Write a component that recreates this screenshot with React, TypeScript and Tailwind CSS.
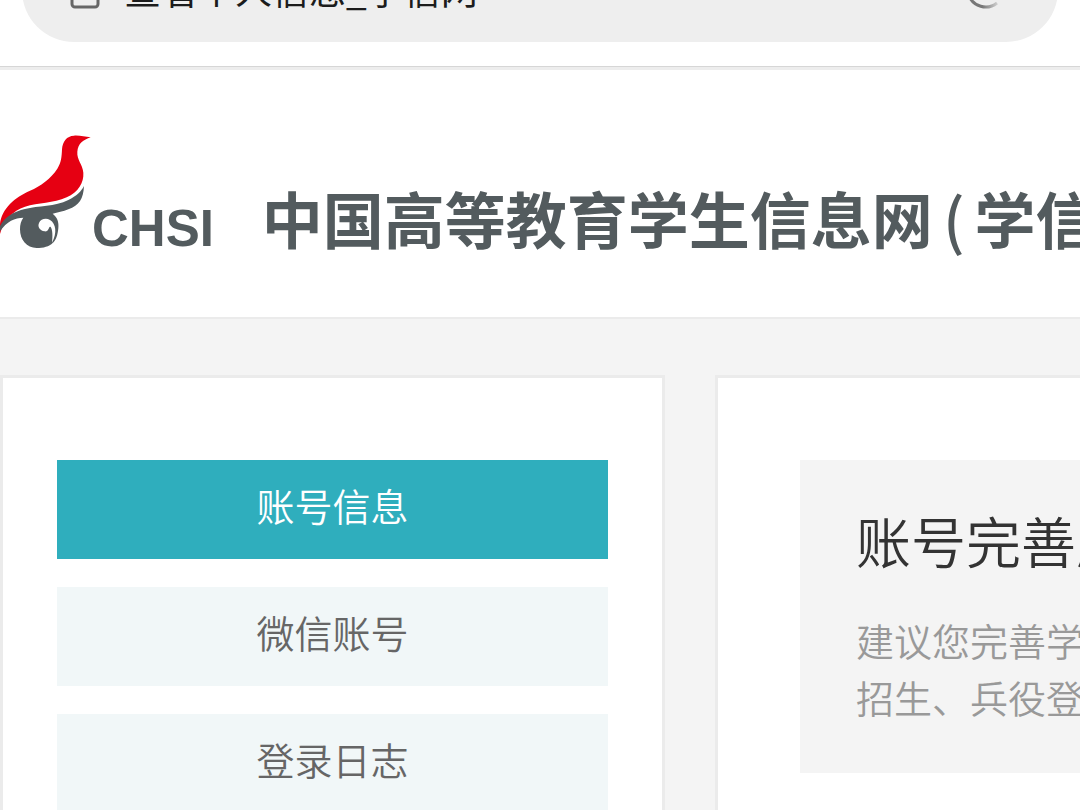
import React from 'react';

const menuItems = [
  { label: '账号信息', href: '#account', active: true },
  { label: '微信账号', href: '#wechat', active: false },
  { label: '登录日志', href: '#logs', active: false },
];

const BirdLogo = () => (
  <svg viewBox="0 42 276 348" className="h-29 w-23 shrink-0" aria-hidden="true">
    <path
      fill="#e60012"
      d="M272 52C255 50 240 46 222 47C200 48 188 64 186 88C185 110 184 128 172 146C152 176 122 198 90 212C45 232 5 265 0 312V342C10 302 38 272 75 260C115 248 160 250 200 232C235 216 252 188 250 158C248 132 230 120 232 95C234 70 250 60 272 52Z"
    />
    <path
      fill="#535b5e"
      d="M252 198C250 236 238 256 205 268C190 274 172 278 158 281C172 292 177 306 175 325C173 345 168 362 158 369C148 380 130 384 110 384C80 384 60 360 60 328C60 314 63 302 70 293C45 294 20 303 0 334V318C14 290 42 275 75 267C115 257 165 260 205 240C230 228 244 214 252 198Z"
    />
    <path
      fill="#fff"
      d="M134 334C119 332 112 320 117 309C122 297 138 293 150 300C168 311 172 338 156 368C158 348 158 330 152 321C147 319 148 325 145 328C143 333 139 335 134 334Z"
    />
  </svg>
);

const BrowserBar = () => (
  <div className="border-b border-[#d6d6d6] pb-6">
    <div className="-mt-16 mx-[22px] flex h-[106px] items-center justify-between rounded-[52px] bg-[#eeeeee] pl-12 pr-13">
      <div className="flex items-center gap-6">
        <svg viewBox="0 0 30 42" className="h-[42px] w-[30px]" fill="none" stroke="#666" strokeWidth="3" aria-hidden="true">
          <path d="M8 16V9a7 7 0 0 1 14 0v7" />
          <rect x="2" y="14" width="26" height="25" rx="3" />
        </svg>
        <span className="text-[37px] leading-[52px] text-[#1c1c1c]">查看个人信息_学信网</span>
      </div>
      <svg viewBox="0 0 40 40" className="h-10 w-10" fill="none" strokeWidth="3" aria-hidden="true">
        <defs>
          <linearGradient id="spinner" x1="0" y1="0" x2="1" y2="0">
            <stop offset="0.5" stopColor="#777" />
            <stop offset="1" stopColor="#ccc" />
          </linearGradient>
        </defs>
        <path stroke="url(#spinner)" d="M31 34A18 18 0 1 1 20 2" />
      </svg>
    </div>
  </div>
);

const SiteHeader = () => (
  <header className="flex items-end border-t-3 border-b-2 border-t-[#ededed] border-b-[#ebebeb] bg-white pt-16 pb-[67px]">
    <BirdLogo />
    <span className="font-['Liberation_Sans',Arial,sans-serif] text-[51px] leading-[42px] font-bold text-[#535b5e]">CHSI</span>
    <h1 className="ml-12 text-[61px] leading-16 font-bold whitespace-nowrap text-[#535b5e]">
      中国高等教育学生信息网<span className="px-2.5 font-medium">(</span>学信网
    </h1>
  </header>
);

const SideMenu = () => (
  <nav className="w-[665px] shrink-0 border-3 border-[#ebebeb] bg-white px-[54px] pt-[82px] pb-20">
    <ul className="flex flex-col gap-7">
      {menuItems.map((item) => (
        <li key={item.label}>
          <a
            href={item.href}
            className={`block pt-4 pb-[26px] text-center text-[38px] leading-[57px] font-[350] ${
              item.active ? 'bg-[#2faebd] text-white' : 'bg-[#f1f7f8] text-[#666]'
            }`}
          >
            {item.label}
          </a>
        </li>
      ))}
    </ul>
  </nav>
);

const AccountPanel = () => (
  <section className="min-w-0 flex-1 overflow-hidden border-y-3 border-l-3 border-[#ebebeb] bg-white pt-[82px] pl-[82px]">
    <div className="bg-[#f4f4f4] pt-[39px] pb-12 pl-14 whitespace-nowrap">
      <h2 className="text-[55px] leading-20 font-[350] text-[#333]">账号完善度</h2>
      <p className="mt-8 text-[38px] leading-[57px] font-[350] text-[#999]">
        建议您完善学历
        <br />
        招生、兵役登记
      </p>
    </div>
  </section>
);

const App = () => {
  return (
    <div
      lang="zh-CN"
      className="h-screen overflow-hidden bg-[#f4f4f4] font-['Noto_Sans_CJK_SC',sans-serif]"
    >
      <div className="overflow-hidden bg-white">
        <BrowserBar />
      </div>
      <SiteHeader />
      <main className="mt-14 flex gap-[50px]">
        <SideMenu />
        <AccountPanel />
      </main>
    </div>
  );
};

export default App;
